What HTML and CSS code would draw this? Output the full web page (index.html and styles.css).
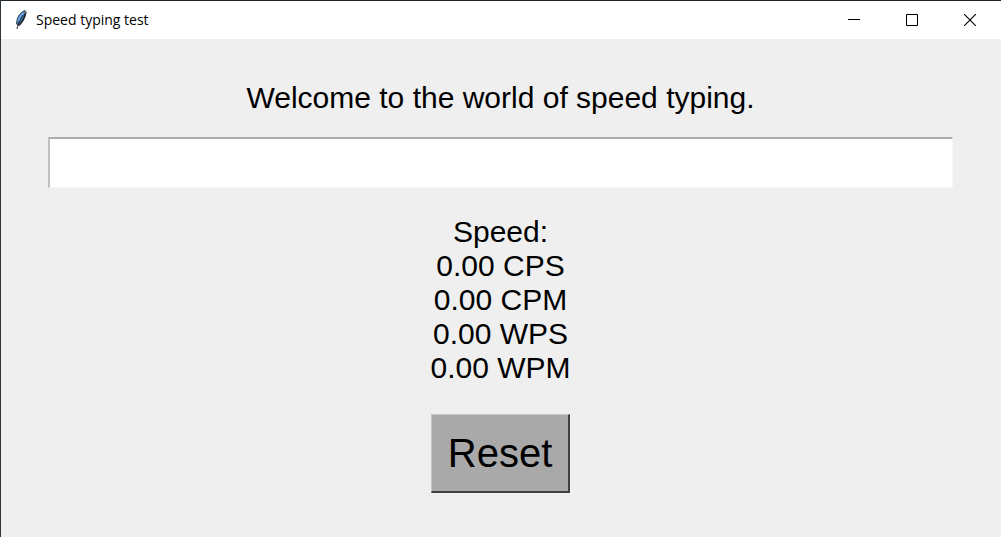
FILE: index.html
```html
<!DOCTYPE html>
<html lang="en">
<head>
<meta charset="utf-8">
<title>Speed typing test</title>
<link rel="stylesheet" href="styles.css">
</head>
<body>
<div class="window">
  <header class="titlebar">
    <svg class="feather" width="14" height="20" viewBox="0 0 14 20" aria-hidden="true">
      <path d="M11 .5C7 2 3.500 6 3 10.500L2.500 14L4.500 15.500C8.500 13 11 8 12 2.500Z" fill="#3f78b8" stroke="#39414c"/>
      <path d="M9.500 3C7 5 5 8 4.500 11" fill="none" stroke="#6ea6de" stroke-width="2"/>
      <path d="M11.500 3C10.500 8 8.500 12 4.500 15.500" fill="none" stroke="#20262e" stroke-width="1.500"/>
      <path d="M9 5C7 9 4.500 12 3 19" fill="none" stroke="#242a33"/>
      <path d="M9.500 1L12 1.500L12 4" fill="none" stroke="#77736e"/>
    </svg>
    <span class="title">Speed typing test</span>
    <div class="controls">
      <button class="control" type="button" aria-label="Minimize">
        <svg width="12" height="12" viewBox="0 0 12 12"><path d="M0 5.500H12" stroke="#000"/></svg>
      </button>
      <button class="control" type="button" aria-label="Maximize">
        <svg width="12" height="12" viewBox="0 0 12 12"><path d="M.5 .5H11.500V11.500H.5Z" fill="none" stroke="#000"/></svg>
      </button>
      <button class="control" type="button" aria-label="Close">
        <svg width="12" height="12" viewBox="0 0 12 12"><path d="M0 0L12 12M12 0L0 12" stroke="#000" stroke-width="1.100"/></svg>
      </button>
    </div>
  </header>
  <main class="content">
    <label class="prompt" for="typing">Welcome to the world of speed typing.</label>
    <input class="entry" id="typing" type="text" autocomplete="off">
    <div class="stats">
      <div>Speed:</div>
      <div>0.00 CPS</div>
      <div>0.00 CPM</div>
      <div>0.00 WPS</div>
      <div>0.00 WPM</div>
    </div>
    <button class="reset" type="button">Reset</button>
  </main>
</div>
</body>
</html>
```
FILE: styles.css
```css
* {
  box-sizing: border-box;
}

body {
  margin: 0;
  background: #efefef;
  color: #000;
  font-family: "Liberation Sans", Arial, sans-serif;
}

.window {
  min-height: 100vh;
  border-top: 1px solid #20242c;
  border-left: 1px solid #2b363d;
}

.titlebar {
  display: flex;
  align-items: center;
  height: 38px;
  padding: 0 2px 0 13px;
  background: #fff;
}

.feather {
  margin-right: 8px;
}

.title {
  font: 14px/20px "Open Sans", "Segoe UI", sans-serif;
}

.controls {
  display: flex;
  align-self: stretch;
  margin-left: auto;
}

.control {
  display: grid;
  place-items: center;
  width: 58px;
  padding: 0;
  border: 0;
  background: transparent;
}

.content {
  display: flex;
  flex-direction: column;
  align-items: center;
  padding: 42px 48px 42px 47px;
}

.prompt {
  font-size: 30px;
  line-height: 34px;
}

.entry {
  width: 100%;
  height: 51px;
  margin-top: 22px;
  padding: 4px;
  border: 1px solid #f8f8f8;
  border-top: 2px solid #adadad;
  border-left: 2px solid #c0c0c0;
  border-radius: 0;
  background: #fff;
  font: 30px "Liberation Sans", Arial, sans-serif;
  outline: 0;
}

.stats {
  margin-top: 27px;
  font-size: 30px;
  line-height: 34px;
  text-align: center;
}

.reset {
  margin-top: 29px;
  padding: 15px 16px;
  border: 1px solid;
  border-right-width: 2px;
  border-bottom-width: 2px;
  border-color: #c4c4c4 #3f3f3f #3f3f3f #c4c4c4;
  border-radius: 0;
  background: #a9a9a9;
  color: #000;
  font: 40px/46px "Liberation Sans", Arial, sans-serif;
}
```
